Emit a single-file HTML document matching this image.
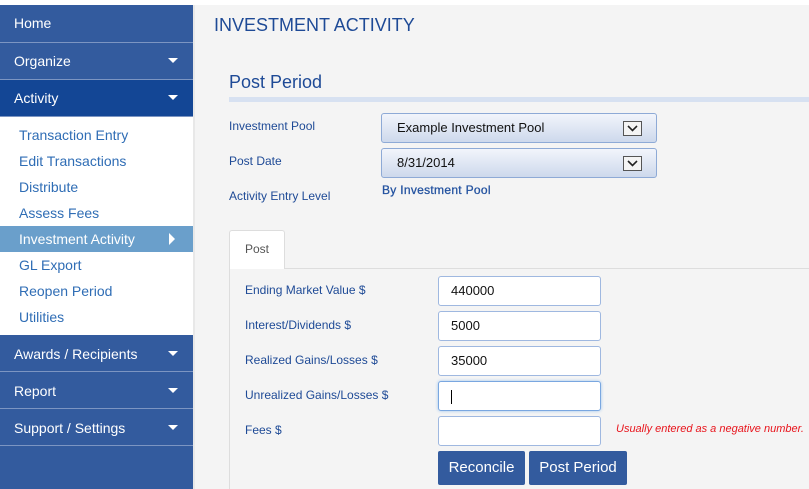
<!DOCTYPE html>
<html><head><style>
*{margin:0;padding:0;box-sizing:border-box}
body{width:809px;height:489px;overflow:hidden;background:#f4f4f4;font-family:"Liberation Sans",Arial,sans-serif;position:relative}
.top{position:absolute;left:0;top:0;width:809px;height:5px;background:#fff}
.sb{position:absolute;left:0;top:5px;width:193px;height:484px;background:#335b9e}
.sb .m{position:absolute;left:0;width:193px;height:36px;color:#fff;font-size:14px;line-height:36px;padding-left:14px;border-bottom:1px solid #7c95c2}
.sb .m .c{position:absolute;right:15px;top:15px;width:0;height:0;border-left:5px solid transparent;border-right:5px solid transparent;border-top:5px solid #fff}
.sub{position:absolute;left:0;top:112px;width:193px;height:218px;background:#fff}
.sub div{position:absolute;left:0;width:193px;height:26px;line-height:26px;padding-left:19px;font-size:14px;color:#2f6db5}
.sub .h{background:#6a9fcb;color:#fff}
.sub .h:after{content:"";position:absolute;right:18px;top:7px;border-top:6px solid transparent;border-bottom:6px solid transparent;border-left:6px solid #fff}
.edge{position:absolute;left:193px;top:5px;width:2px;height:484px;background:#e8e8e8}
.t{position:absolute;color:#1e4a96}
.lbl{position:absolute;font-size:12px;color:#1e4a96}
.sel{position:absolute;left:381px;width:276px;height:30px;border:1px solid #8eaad6;border-radius:3px;background:linear-gradient(#f2f5fb,#cdd9ec);font-size:13px;line-height:28px;padding-left:15px;color:#111}
.sel i{position:absolute;right:14px;top:7px;width:19px;height:15px;border:1px solid #555;background:#f4f4f4}
.sel svg{display:block}
.inp{position:absolute;left:438px;width:163px;height:30px;background:#fff;border:1px solid #9fb8e0;border-radius:3px;font-size:13px;line-height:28px;padding-left:12px;color:#111}
.btn{position:absolute;top:451px;height:34px;background:#335b9e;color:#fff;font-size:15px;line-height:34px;text-align:center;border-radius:2px}
</style></head><body>
<div class="top"></div>
<div class="sb">
<div class="m" style="top:0;height:38px;line-height:36px">Home</div>
<div class="m" style="top:38px;height:37px">Organize<span class="c"></span></div>
<div class="m" style="top:75px;height:37px;background:#134695">Activity<span class="c"></span></div>
<div class="sub">
<div style="top:5px">Transaction Entry</div>
<div style="top:31px">Edit Transactions</div>
<div style="top:57px">Distribute</div>
<div style="top:83px">Assess Fees</div>
<div class="h" style="top:109px">Investment Activity</div>
<div style="top:135px">GL Export</div>
<div style="top:161px">Reopen Period</div>
<div style="top:187px">Utilities</div>
</div>
<div class="m" style="top:331px">Awards / Recipients<span class="c"></span></div>
<div class="m" style="top:368px">Report<span class="c"></span></div>
<div class="m" style="top:405px">Support / Settings<span class="c"></span></div>
</div>
<div class="edge"></div>
<div class="t" style="left:214px;top:15px;font-size:18px">INVESTMENT ACTIVITY</div>
<div class="t" style="left:229px;top:72px;font-size:18px">Post Period</div>
<div style="position:absolute;left:229px;top:97px;width:580px;height:5px;background:#d7e1f1"></div>
<div class="lbl" style="left:229px;top:119px">Investment Pool</div>
<div class="lbl" style="left:229px;top:154px">Post Date</div>
<div class="lbl" style="left:229px;top:189px">Activity Entry Level</div>
<div class="sel" style="top:113px">Example Investment Pool<i><svg width="17" height="13"><path d="M4 4l4.5 4.5L13 4" stroke="#222" stroke-width="1.6" fill="none"/></svg></i></div>
<div class="sel" style="top:148px">8/31/2014<i><svg width="17" height="13"><path d="M4 4l4.5 4.5L13 4" stroke="#222" stroke-width="1.6" fill="none"/></svg></i></div>
<div class="lbl" style="left:382px;top:183px;font-size:12px;letter-spacing:0.3px;color:#2453a0;-webkit-text-stroke:0.3px #2453a0">By Investment Pool</div>
<div style="position:absolute;left:229px;top:268px;width:580px;height:221px;border-left:1px solid #ddd;border-top:1px solid #ddd"></div>
<div style="position:absolute;left:229px;top:230px;width:56px;height:39px;background:#fff;border:1px solid #ddd;border-bottom:none;border-radius:3px 3px 0 0;font-size:12px;color:#555;text-align:center;line-height:37px">Post</div>
<div class="lbl" style="left:245px;top:283px">Ending Market Value $</div>
<div class="lbl" style="left:245px;top:318px">Interest/Dividends $</div>
<div class="lbl" style="left:245px;top:353px">Realized Gains/Losses $</div>
<div class="lbl" style="left:245px;top:388px">Unrealized Gains/Losses $</div>
<div class="lbl" style="left:245px;top:423px">Fees $</div>
<div class="inp" style="top:276px">440000</div>
<div class="inp" style="top:311px">5000</div>
<div class="inp" style="top:346px">35000</div>
<div class="inp" style="top:381px;border-color:#7aa7e0;box-shadow:0 0 3px #9cc4f0"><span style="display:inline-block;width:1px;height:14px;background:#000;vertical-align:middle"></span></div>
<div class="inp" style="top:416px"></div>
<div style="position:absolute;left:616px;top:423px;font-size:11px;font-style:italic;color:#e8141c">Usually entered as a negative number.</div>
<div class="btn" style="left:438px;width:87px">Reconcile</div>
<div class="btn" style="left:529px;width:98px">Post Period</div>
</body></html>
